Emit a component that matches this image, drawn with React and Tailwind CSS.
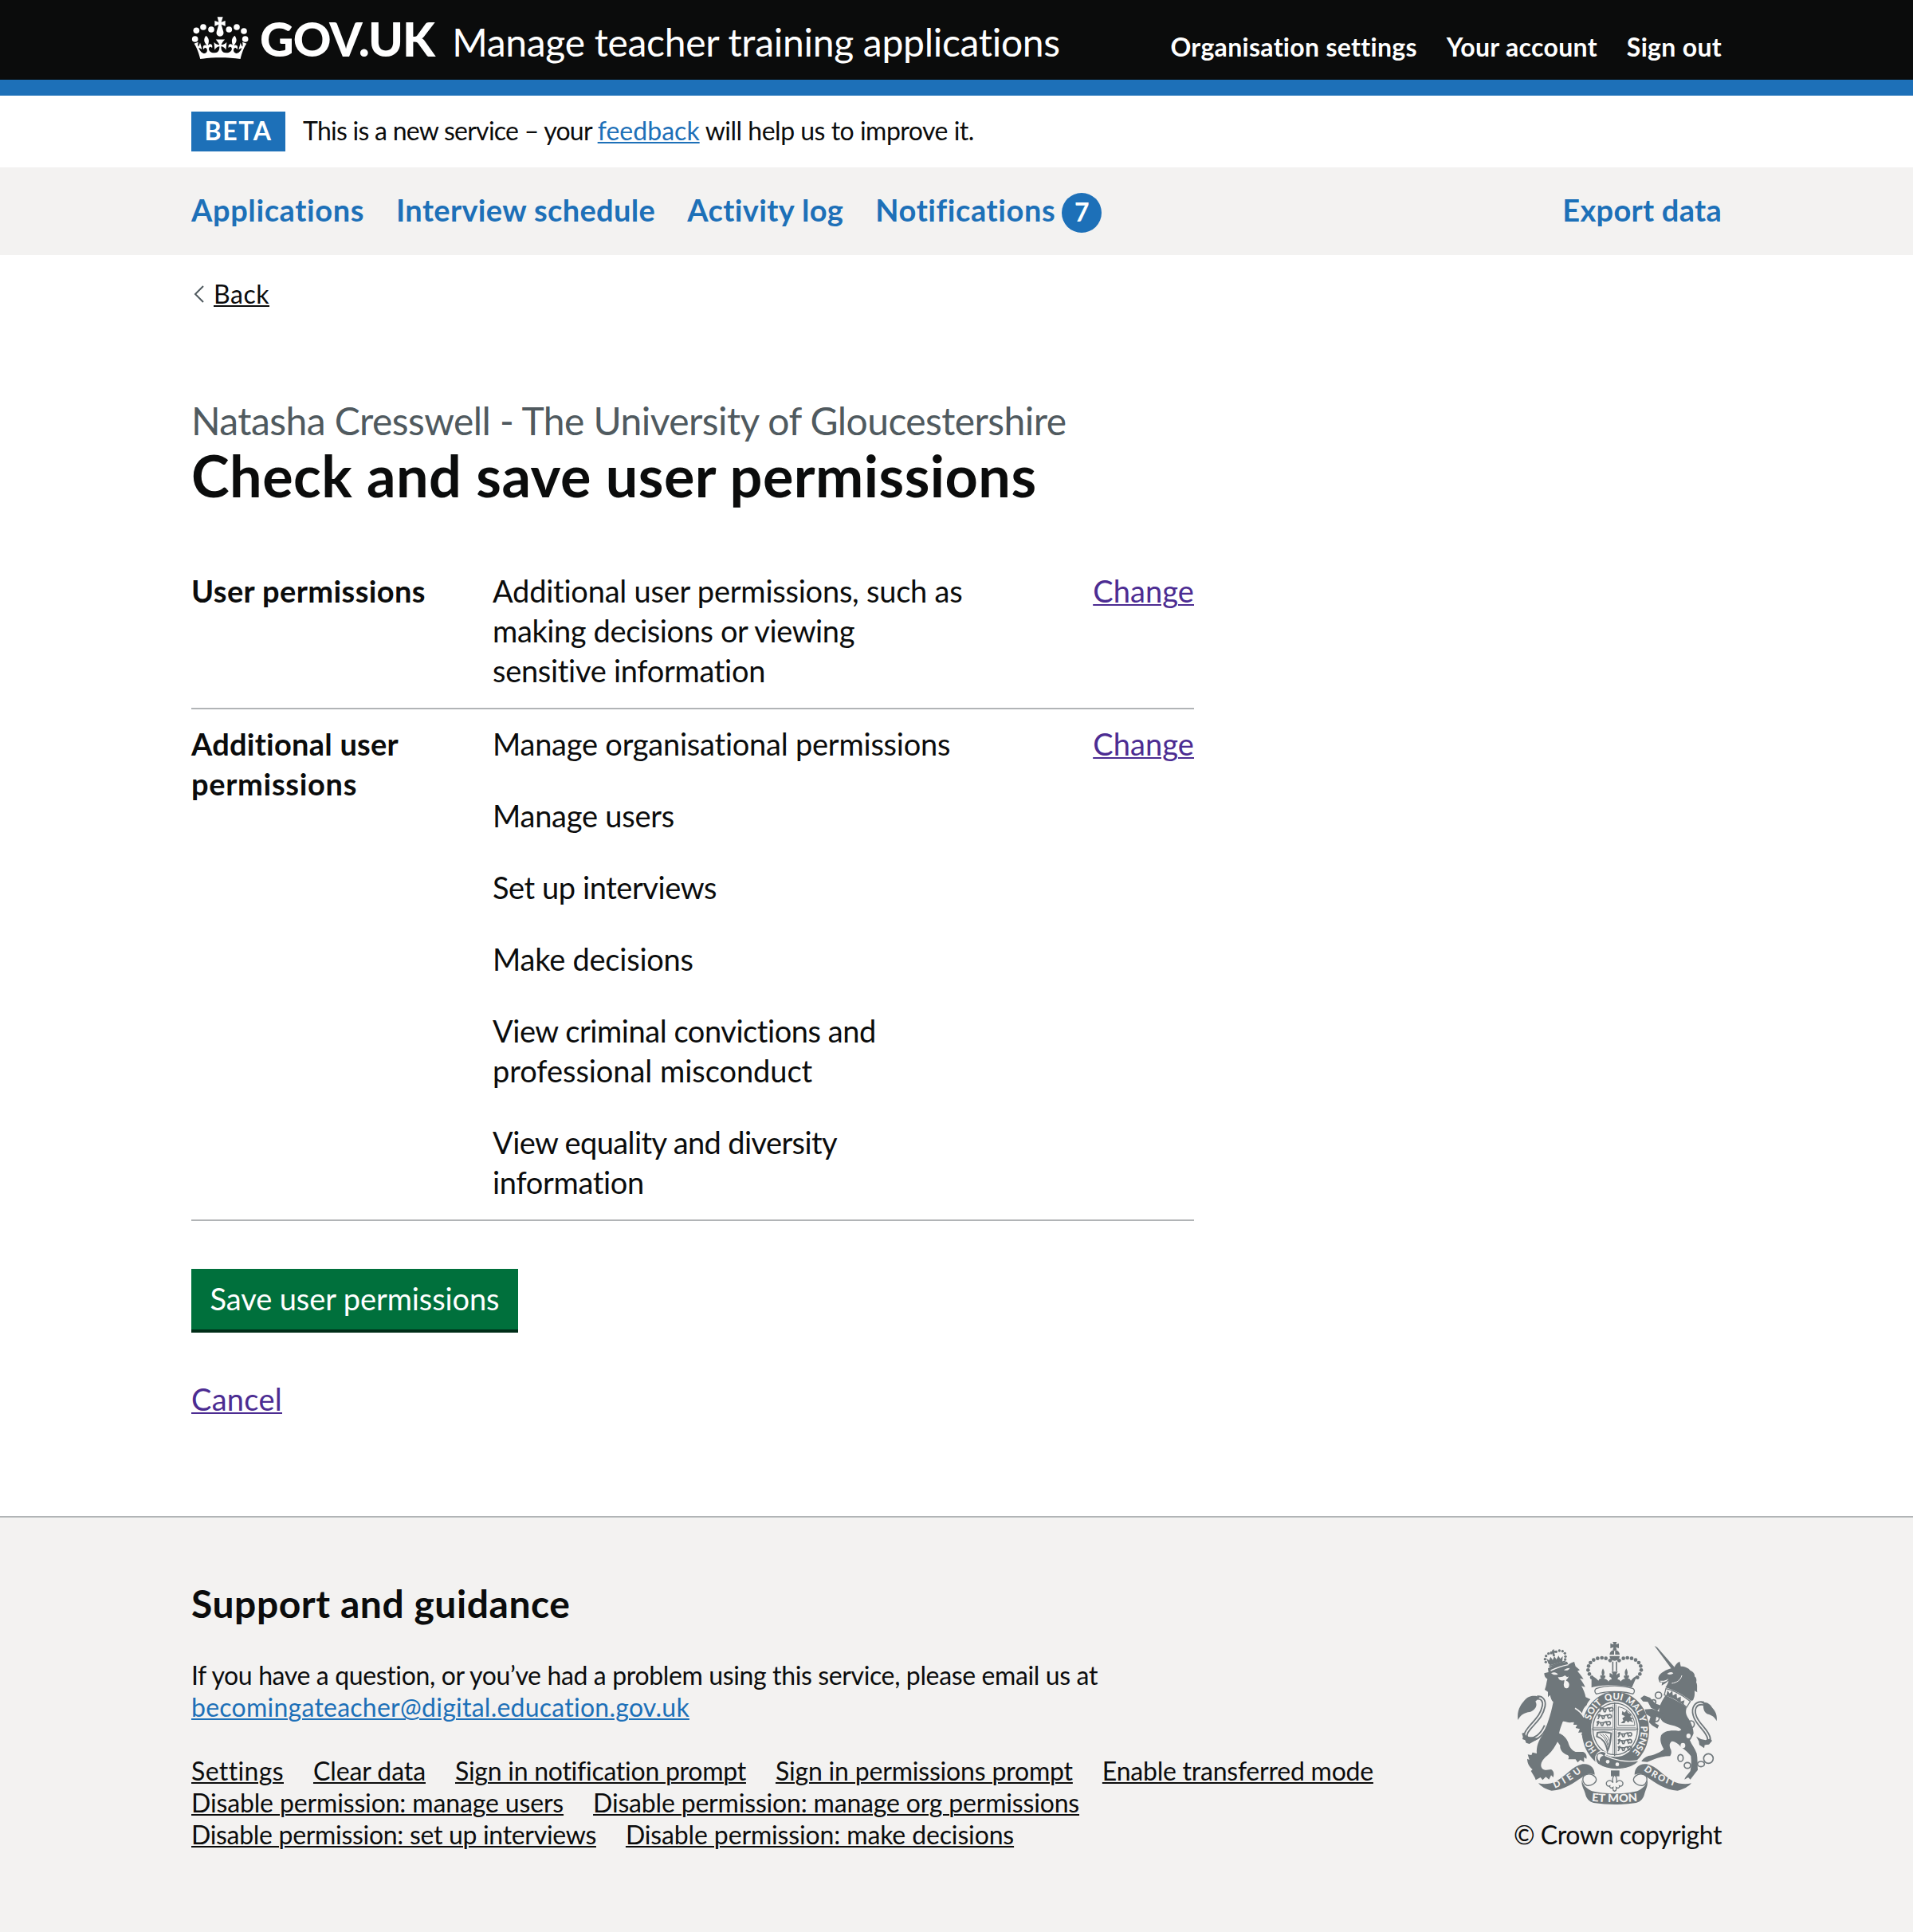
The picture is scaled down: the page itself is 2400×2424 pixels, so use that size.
import React from "react";

const BEADS = [[44, 117], [49, 85], [75, 72], [105, 81], [172, 81], [201, 72], [228, 87], [233, 117]];

function Crown() {
  return (
    <svg className="h-[53px] w-[72px] shrink-0" viewBox="30 33 216 159" fill="#fff">
      {BEADS.map(([x, y]) => <circle key={x} cx={x} cy={y} r="11.5" />)}
      <path d="M128 34h21l-6 19 15-5v20l-15-6 8 28a13.5 13.5 0 1 1-26 0l8-28-15 6V48l15 5z" />
      <path transform="translate(38 -6) scale(6.25 6.6)" d="M16 29.2c4.4 0 8.6.3 12.3.8 1.1-4.5 2.4-7 3.7-8.8l-2.5-.9c.2 1.3.3 1.9 0 2.7-.4-.4-.8-1.1-1.1-2.3l-1.2 4c.7-.5 1.3-.8 2-.9-1.1 2.5-2.6 3.1-3.5 3-1.1-.2-1.7-1.2-1.5-2.1.3-1.2 1.5-1.5 2.1-.1 1.1-2.3-.8-3-2-2.3 1.9-1.9 2.1-3.5.6-5.6-2.1 1.6-2.1 3.2-1.2 5.5-1.2-1.4-3.2-.6-2.5 1.6.9-1.4 2.1-.5 1.9.8-.2 1.1-1.7 2.1-3.5 1.9-2.7-.2-2.9-2.1-2.9-3.6.7-.1 1.9.5 2.9 1.9l.4-4.3c-1.1 1.1-2.1 1.4-3.2 1.4.4-1.2 2.1-3 2.1-3h-5.4s1.7 1.9 2.1 3c-1.1 0-2.1-.2-3.2-1.4l.4 4.3c1-1.4 2.2-2 2.9-1.9-.1 1.5-.2 3.4-2.9 3.6-1.9.2-3.4-.8-3.5-1.9-.2-1.3 1-2.2 1.9-.8.7-2.3-1.2-3-2.5-1.6.9-2.2.9-3.9-1.2-5.5-1.5 2-1.3 3.7.6 5.6-1.2-.7-3.1 0-2 2.3.6-1.4 1.8-1.1 2.1.1.2.9-.3 1.9-1.5 2.1-.9.2-2.4-.5-3.5-3 .6 0 1.2.3 2 .9l-1.2-4c-.3 1.1-.7 1.9-1.1 2.3-.3-.8-.2-1.4 0-2.7l-2.5.9c1.3 1.8 2.6 4.3 3.7 8.8 3.7-.5 7.9-.8 12.3-.8z" />
    </svg>
  );
}

const ARCH = [[454, 130], [470, 122], [485, 120], [501, 122], [516, 128], [528, 138], [535, 151], [537, 166], [532, 181], [523, 194]];
const LINKS = [[602, 261, 12, 12], [584, 286, 8, 8], [593, 346, 12, 14], [725, 370, 12, 13], [685, 497, 10, 13], [711, 525, 12, 11], [762, 520, 13, 10], [790, 499, 18, 18]];
const LION_BEADS = [[178, 136], [175, 125], [179, 113], [188, 104], [198, 102], [217, 97], [229, 93], [241, 95], [250, 103], [252, 115], [251, 126]];
const GARTER = [["HO", 80, 46], ["SOIT", 200, 78], ["QUI", 293, 64], ["MAL", 368, 72], ["Y", 446, 22], ["PENSE", 482, 106]];
const G = "#6f777b";
const P = "#f3f2f1";

function Passant({ x, y }) {
  return (
    <g transform={`translate(${x} ${y})`} stroke={G} strokeWidth="5" fill="none" strokeLinecap="round">
      <path d="M4 7c8-6 14 2 22-1s10-6 16-2M8 8l-5 9M16 8l4 9M28 6l-4 11M37 5l5 11M42 3c6-4 12 0 11 6s-4 6-7 4M3 3l6-2" />
    </g>
  );
}

function Crest({ className }) {
  return (
    <svg className={className} viewBox="72 60 750 612" fill={G}>
      {/* crown */}
      <path d="M430 60h15l-3 10 11-4v18l-11-4 3 11h-15l3-11-12 4V66l12 4z" />
      <path d="M418 108a19 18 0 0 1 38 0z" /><path d="M418 113h38a19 18 0 0 1-38 0z" />
      <path d="M437 94v16" stroke={P} strokeWidth="4" />
      {ARCH.map(([x, y]) => (
        <g key={x + y}><circle cx={x} cy={y} r="7" /><circle cx={874 - x} cy={y} r="7" /></g>
      ))}
      <path d="M430 134v36M444 134v36" stroke={G} strokeWidth="5" />
      <path d="M350 186c8 6 18 10 26 20 4-8 8-8 12-8-6-4-6-8-4-12 3-1 5 0 7 2-5-10-3-18 2-28 6 10 8 18 2 28 3-3 6-2 7 0 1 5-1 8-6 11 8 0 14 4 18 10 3-6 8-8 12-8-1-6-3-8-8-9v-14c6 1 9 3 12 7-1-5-1-8-5-13h24c-4 5-5 8-5 13 3-4 6-6 12-7v14c-5 1-7 3-8 9 4 0 9 2 12 8 4-6 10-10 18-10-5-3-7-6-6-11 1-2 4-3 7 0-6-10-4-18 2-28 5 10 7 18 2 28 2-2 4-3 7-2 2 4 2 8-4 12 4 0 8 0 12 8 8-10 14-14 24-20l-20 46c-40-12-112-12-152 0z" />
      <path d="M367 236c40-14 100-14 140 0 7 6 5 14-1 20-40-12-98-12-138 0-6-6-8-14-1-20z" fill={P} stroke={G} strokeWidth="4" />

      {/* garter and shield */}
      <ellipse cx="440" cy="393" rx="127" ry="146" />
      <ellipse cx="439" cy="388" rx="91" ry="105" fill={P} />
      <ellipse cx="439" cy="388" rx="84" ry="97" fill="none" stroke={G} strokeWidth="4" />
      <path d="M437 288v202M352 388h174" stroke={G} strokeWidth="4" />
      <path d="M431 296v86h-74M443 296v86h74M431 396v88M443 396v88M357 394h74M443 394h74" stroke={G} strokeWidth="2" fill="none" />
      <Passant x="378" y="306" /><Passant x="372" y="332" /><Passant x="368" y="358" />
      <Passant x="448" y="400" /><Passant x="448" y="426" /><Passant x="448" y="452" />
      <path d="M451 304v70h62c-2-34-22-62-62-70z" fill="none" stroke={G} strokeWidth="3" />
      <path d="M460 366l10-10-4-8 10-8-12-6 2-14 8 6 8-8 6 10 12 4-4 10 12 8-8 2 8 12-14-6-6 6-8-8-6 10z" />
      <path d="M372 402c16-4 40-2 52 2-2 26-2 44-14 66-6-32-18-46-40-54z" fill="none" stroke={G} strokeWidth="6" />
      <path d="M382 408c14 8 26 22 30 50M392 408c12 8 18 20 22 40M402 408c8 6 12 12 16 26" fill="none" stroke={G} strokeWidth="3" />
      <defs>
        <path id="garter" d="M439 503A97 113 0 0 1 439 277A97 113 0 0 1 439 503" />
        <path id="motto-l" d="M212 611Q264 591 330 536" />
        <path id="motto-r" d="M546 543Q600 588 690 611" />
        <path id="motto-c" d="M350 659Q437 668 530 659" />
      </defs>
      <g fill={P} fontFamily="Lato, sans-serif" fontWeight="900" fontSize="35">
        {GARTER.map(([t, at, len]) => (
          <text key={t}><textPath href="#garter" startOffset={at} textLength={len} lengthAdjust="spacingAndGlyphs">{t}</textPath></text>
        ))}
      </g>
      <path d="M366 492c8-22 26-24 40-14l-4 10c40 20 84 26 130 18-40 44-120 40-158 14-8-6-10-16-8-28z" stroke={P} strokeWidth="4" />
      <circle cx="411" cy="511" r="7" fill={P} /><circle cx="447" cy="521" r="7" fill={P} />
      <path d="M372 484c10-8 22-4 26 6-12 0-18 10-14 24-12-4-16-18-12-30z" fill={P} stroke={G} strokeWidth="4" />

      {/* lion */}
      <path d="M178 376c-14 32-40 58-70 48-12-8-4-24 6-36 26-32 48-48 56-86 4-22-8-34-24-32" fill="none" stroke={G} strokeWidth="16" />
      <path d="M178 376c-14 32-40 58-70 48-12-8-4-24 6-36 26-32 48-48 56-86 4-22-8-34-24-32" fill="none" stroke={P} strokeWidth="5" />
      <path d="M156 268c-18-8-42-8-58 12-12 14-30 36-25 74 10-20 26-28 44-30 20-6 32-24 22-40zM88 404l4 14-2 8 10 4 4 10 12 4 38-22-22-2-24-2-12-16z" />
      {LION_BEADS.map(([x, y]) => <circle key={x} cx={x} cy={y} r="5" />)}
      <path d="M203 90l6-2v6l7-1 1 7-7 1 3 12-8 2-3-12-6 1-1-7 6-1zM188 142l-8-20 10 8 6-14 8 12 6-14 8 12 8-14 6 12 10-10-2 20-46 14z" />
      <path d="M190 152l62-20" stroke={G} strokeWidth="5" />
      <path d="M172 178L188 174L186 160C205 145 240 137 258 134L263 146C270 140 280 136 285 135L290 152L306 166L297 170C306 180 315 192 320 200L306 198C314 208 322 220 326 230L312 226C320 240 326 256 328 268L346 276C338 284 334 290 332 298C322 306 316 318 314 330C330 350 342 366 349 386L348 408L338 404L334 416L326 408L312 412L316 400L300 402L306 388L290 384L296 372L282 372L284 362L268 364C258 364 250 358 242 360C236 376 230 392 228 404C240 408 256 420 262 438C266 452 272 466 290 474L318 474C328 478 334 488 331 500L322 494L322 512L308 504L298 514L290 502L262 502C266 496 266 490 260 486C242 480 230 466 232 450L222 436C214 452 204 470 186 486C170 498 160 512 160 524C160 534 166 542 180 542L198 540C208 546 210 556 206 570L198 562L190 578L178 568L166 580L158 570L140 580C138 570 130 560 122 546L128 540C116 530 108 516 108 500L116 504L110 484L124 486L128 476L144 480C142 456 150 430 168 408C180 380 196 340 206 286C200 282 196 270 194 260L186 268L186 248L174 240C180 226 180 212 184 200C176 196 172 188 172 178Z" />
      <path d="M198 178c10-6 20-4 26 4-10 4-20 2-26-4zM246 166c8-6 16-8 22-8-2 8-12 12-22 8zM196 166c24-12 44-18 66-22l1 4c-24 4-42 12-66 22z" fill={P} />
      <path d="M224 192c8 2 18 0 26-6 6 6 10 8 14 4-2 8-8 10-10 16 12 4 14 14 10 24-6 8-16 6-18-4-2-8 2-14 2-22-10 4-22 0-24-12z" fill={P} />
      <path d="M288 310c14 8 26 20 34 34" stroke={P} strokeWidth="5" fill="none" />

      {/* unicorn */}
      <path d="M772 292c-30-6-42 18-34 44 8 34 50 58 54 88 0 14-12 20-28 12" fill="none" stroke={G} strokeWidth="16" />
      <path d="M772 292c-30-6-42 18-34 44 8 34 50 58 54 88 0 14-12 20-28 12" fill="none" stroke={P} strokeWidth="5" />
      <path d="M762 288c20-4 34 4 44 22 10 12 18 24 15 48-8-16-18-22-32-26-14-4-20-20-18-38zM744 416l10 18 2 14 18 12 2-12 16-2 12-14-8-8-16 6-18-4z" />
      <path d="M587 75l10 5 66 76-10 8z" />
      <path d="M602 200C600 190 608 180 618 174C632 164 648 160 662 156C664 148 672 138 682 134L686 152C700 152 716 158 722 168C732 172 740 180 738 190C746 196 746 204 744 212C750 222 746 234 748 250L738 244C738 254 740 264 732 280L724 282C700 262 660 240 628 232C634 222 640 212 640 206C634 212 622 220 614 224L616 212L606 212Z" />
      <path d="M628 262C650 270 690 290 708 308C704 320 704 330 712 344C724 360 734 386 734 404C730 414 726 424 720 430C726 446 740 462 746 480C750 500 748 520 750 542L742 552L722 578L714 570L700 578C702 568 716 556 722 546C726 524 726 506 724 490C712 472 690 460 678 446C668 438 660 434 652 434C644 440 642 448 646 460C652 470 652 480 646 490C624 490 600 496 580 504L560 512L538 510C542 500 556 490 570 488C590 484 610 474 622 464C612 446 606 430 612 412C620 398 640 392 668 394C676 396 684 396 688 390C670 372 640 376 618 360C604 346 602 324 606 304C612 288 620 274 628 262Z" />
      <path d="M634 180c10-8 18-8 24-2-6 6-16 6-24 2zM608 206c14 2 24-2 32-8-4 10-16 16-30 12z" fill={P} />
      <path d="M652 216c18-2 34-12 38-30" stroke={P} strokeWidth="3" fill="none" />
      <path d="M630 236c32 6 64 26 92 48l-14 22c-24-22-54-40-84-46z" fill={P} stroke={G} strokeWidth="4" />
      <path d="M632 260l4-18 8 12 10-10 2 18 14-8 2 18 14-6 0 18 14-4-4 18c-20-18-40-30-64-38z" />
      <path d="M612 300l-22-8-20-22-22-8-14 10 10 12 18 2 12 22 24 12zM622 330l-44-18-28 2 6 18 16 10-6 20 12 12 20 12 6-12-14-8 4-24 34 12z" />
      {LINKS.map(([x, y, a, b]) => <ellipse key={x} cx={x} cy={y} rx={a} ry={b} fill="none" stroke={G} strokeWidth="5" />)}
      <ellipse cx="715" cy="414" rx="8" ry="9" fill={P} /><ellipse cx="694" cy="450" rx="9" ry="10" fill={P} />

      {/* pendant */}
      <path d="M423 544h32v22h-32z" />
      <path d="M437 560c10 10 10 18 6 30 6-10 18-12 24-2 4 10-4 18-12 14 2 8-6 10-12 6 2 8-1 12-6 14-5-2-8-6-6-14-6 4-14 2-12-6-8 4-16-4-12-14 6-10 18-8 24 2-4-12-4-20 6-30z" fill={P} stroke={G} strokeWidth="4" />

      {/* motto scroll */}
      <path d="M150 592c24 6 48 2 68-8 34-18 60-56 98-64 28-4 46 14 46 40-18-6-34-4-48 10-30 20-66 48-114 50-22-4-40-16-50-28z" />
      <path d="M726 592c-24 6-50 2-70-8-34-18-60-56-98-64-28-4-46 14-46 40 18-6 34-4 48 10 30 20 66 48 114 50 22-4 42-16 52-28z" />
      <path d="M352 560c20 10 20 24 6 34-8 6-16 8-26 6-12-4-18-20-12-34 8-8 20-10 32-6zM524 560c-20 10-20 24-6 34 8 6 16 8 26 6 12-4 18-20 12-34-8-8-20-10-32-6z" fill={P} stroke={G} strokeWidth="4" />
      <path d="M314 580c4 20 16 32 38 42 50 12 120 12 170 0 22-10 34-22 38-42 4 20-6 34-10 50-4 20-16 32-32 36-54 8-108 8-160 0-16-4-28-16-32-36-4-16-16-30-12-50z" />
      <g fill={P} fontFamily="Lato, sans-serif" fontWeight="900" fontSize="34">
        <text><textPath href="#motto-l" textLength="118" lengthAdjust="spacing">DIEU</textPath></text>
        <text><textPath href="#motto-r" textLength="132" lengthAdjust="spacing">DROIT</textPath></text>
        <text fontSize="42"><textPath href="#motto-c" textLength="174" lengthAdjust="spacingAndGlyphs">ET MON</textPath></text>
      </g>
    </svg>
  );
}

function Link({ className = "", children }) {
  return <a className={"whitespace-nowrap underline decoration-2 underline-offset-[2px] " + className}>{children}</a>;
}

function Row({ label, children }) {
  return (
    <div className="flex border-b-2 border-[#b1b4b6] pt-[18px] pb-[22px]">
      <dt className="w-[378px] shrink-0 font-bold">{label}</dt>
      <dd className="flex-1 tracking-[-0.23px]">{children}</dd>
      <dd><Link className="tracking-[0.1px] text-[#4c2c92]">Change</Link></dd>
    </div>
  );
}

export default function App() {
  return (
    <div className="min-h-[2424px] bg-white font-['Lato',sans-serif] text-[38px] leading-[50px] text-[#0b0c0c] [font-variant-ligatures:none]">
      <header className="h-[120px] border-b-[20px] border-[#1d70b8] bg-[#0b0c0c] text-white">
        <div className="mx-auto flex h-[100px] w-[1920px] items-baseline whitespace-nowrap">
          <div className="flex items-baseline">
            <span className="self-start pt-[21px]"><Crown /></span>
            <span className="ml-[14px] text-[59px] leading-[98px] font-black tracking-[-0.9px]">GOV.UK</span>
            <span className="ml-[22px] text-[48px] tracking-[-0.29px]">Manage teacher training applications</span>
          </div>
          <nav className="ml-auto flex gap-[37px] text-[32px] font-bold tracking-[0.31px]">
            <a>Organisation settings</a><a>Your account</a><a>Sign out</a>
          </nav>
        </div>
      </header>
      <div className="mx-auto flex h-[90px] w-[1920px] items-center text-[32px]">
        <span className="flex h-[50px] w-[118px] items-center justify-center bg-[#1d70b8] pb-[2px] font-bold tracking-[1.6px] text-white">BETA</span>
        <p className="ml-[22px] pb-[3px] tracking-[-0.5px] whitespace-nowrap"><span className="tracking-[-0.74px]">This is a new service – your </span><Link className="tracking-[0.03px] text-[#1d70b8]">feedback</Link> will help us to improve it.</p>
      </div>
      <nav className="h-[110px] bg-[#f3f2f1] font-bold text-[#1d70b8]">
        <div className="mx-auto flex h-[110px] w-[1920px] items-start gap-[40px] pt-[28px] whitespace-nowrap">
          <a className="tracking-[0.61px]">Applications</a><a className="tracking-[0.36px]">Interview schedule</a><a className="tracking-[0.39px]">Activity log</a>
          <span className="flex gap-[8px]"><a className="tracking-[0.59px]">Notifications</a><span className="mt-[4px] flex size-[50px] items-center justify-center rounded-full bg-[#1d70b8] pb-[3px] text-[32px] text-white">7</span></span>
          <a className="ml-auto tracking-[0.28px]">Export data</a>
        </div>
      </nav>
      <main className="mx-auto w-[1920px]">
        <div className="flex items-center pt-[26px] text-[32px] leading-[46px]">
          <svg className="ml-[3px] h-[22px] w-[13px]" viewBox="0 0 13 22" fill="none" stroke="#505a5f" strokeWidth="2"><path d="M12 1 2 11l10 10" /></svg>
          <span className="ml-[12px]"><Link className="tracking-[0.53px]">Back</Link></span>
        </div>
        <p className="mt-[106px] text-[48px] leading-[60px] tracking-[-0.57px] text-[#505a5f]">Natasha Cresswell - The University of Gloucestershire</p>
        <h1 className="-mt-[2px] text-[72px] leading-[80px] font-bold tracking-[0.45px]">Check and save user permissions</h1>
        <dl className="mt-[62px] w-[1258px]">
          <Row label={<span className="tracking-[0.4px]">User permissions</span>}>
            Additional user permissions, such as<br /><span className="tracking-[-0.38px]">making decisions or viewing</span><br /><span className="tracking-[-0.3px]">sensitive information</span>
          </Row>
          <Row label={<><span className="tracking-[0.24px]">Additional user</span><br /><span className="tracking-[0.68px]">permissions</span></>}>
            <p>Manage organisational permissions</p>
            <p className="mt-[40px]">Manage users</p>
            <p className="mt-[40px] tracking-[-0.43px]">Set up interviews</p>
            <p className="mt-[40px]">Make decisions</p>
            <p className="mt-[40px]"><span className="tracking-[-0.45px]">View criminal convictions and</span><br /><span className="tracking-[-0.05px]">professional misconduct</span></p>
            <p className="mt-[40px]"><span className="tracking-[-0.6px]">View equality and diversity</span><br /><span className="tracking-[-0.32px]">information</span></p>
          </Row>
        </dl>
        <button className="mt-[60px] block h-[80px] w-[410px] border-b-4 border-[#002d18] bg-[#00703c] pb-[2px] tracking-[-0.1px] text-white">Save user permissions</button>
        <p className="mt-[58px]"><Link className="tracking-[0.28px] text-[#4c2c92]">Cancel</Link></p>
      </main>
      <footer className="mt-[122px] h-[522px] border-t-2 border-[#b1b4b6] bg-[#f3f2f1] pt-[78px]">
        <div className="mx-auto flex w-[1920px] items-end justify-between text-[32px] leading-[40px]">
          <div>
            <h2 className="text-[48px] leading-[60px] font-bold tracking-[0.55px]">Support and guidance</h2>
            <p className="mt-[40px] tracking-[-0.37px]">If you have a question, or you’ve had a problem using this service, please email us at<br /><Link className="tracking-[0.25px] text-[#1d70b8]">becomingateacher@digital.education.gov.uk</Link></p>
            <ul className="mt-[40px]">
              <li className="flex gap-[37px]"><Link className="tracking-[0.37px]">Settings</Link><Link className="tracking-[-0.09px]">Clear data</Link><Link className="tracking-[-0.26px]">Sign in notification prompt</Link><Link className="tracking-[-0.19px]">Sign in permissions prompt</Link><Link className="tracking-[-0.23px]">Enable transferred mode</Link></li>
              <li className="flex gap-[37px]"><Link className="tracking-[-0.14px]">Disable permission: manage users</Link><Link className="tracking-[-0.18px]">Disable permission: manage org permissions</Link></li>
              <li className="flex gap-[37px]"><Link className="tracking-[-0.31px]">Disable permission: set up interviews</Link><Link className="tracking-[-0.14px]">Disable permission: make decisions</Link></li>
            </ul>
          </div>
          <div className="flex flex-col items-end">
            <Crest className="mr-[6px] h-[204px] w-[250px]" />
            <p className="mt-[18px] tracking-[-0.43px]">© Crown copyright</p>
          </div>
        </div>
      </footer>
    </div>
  );
}
